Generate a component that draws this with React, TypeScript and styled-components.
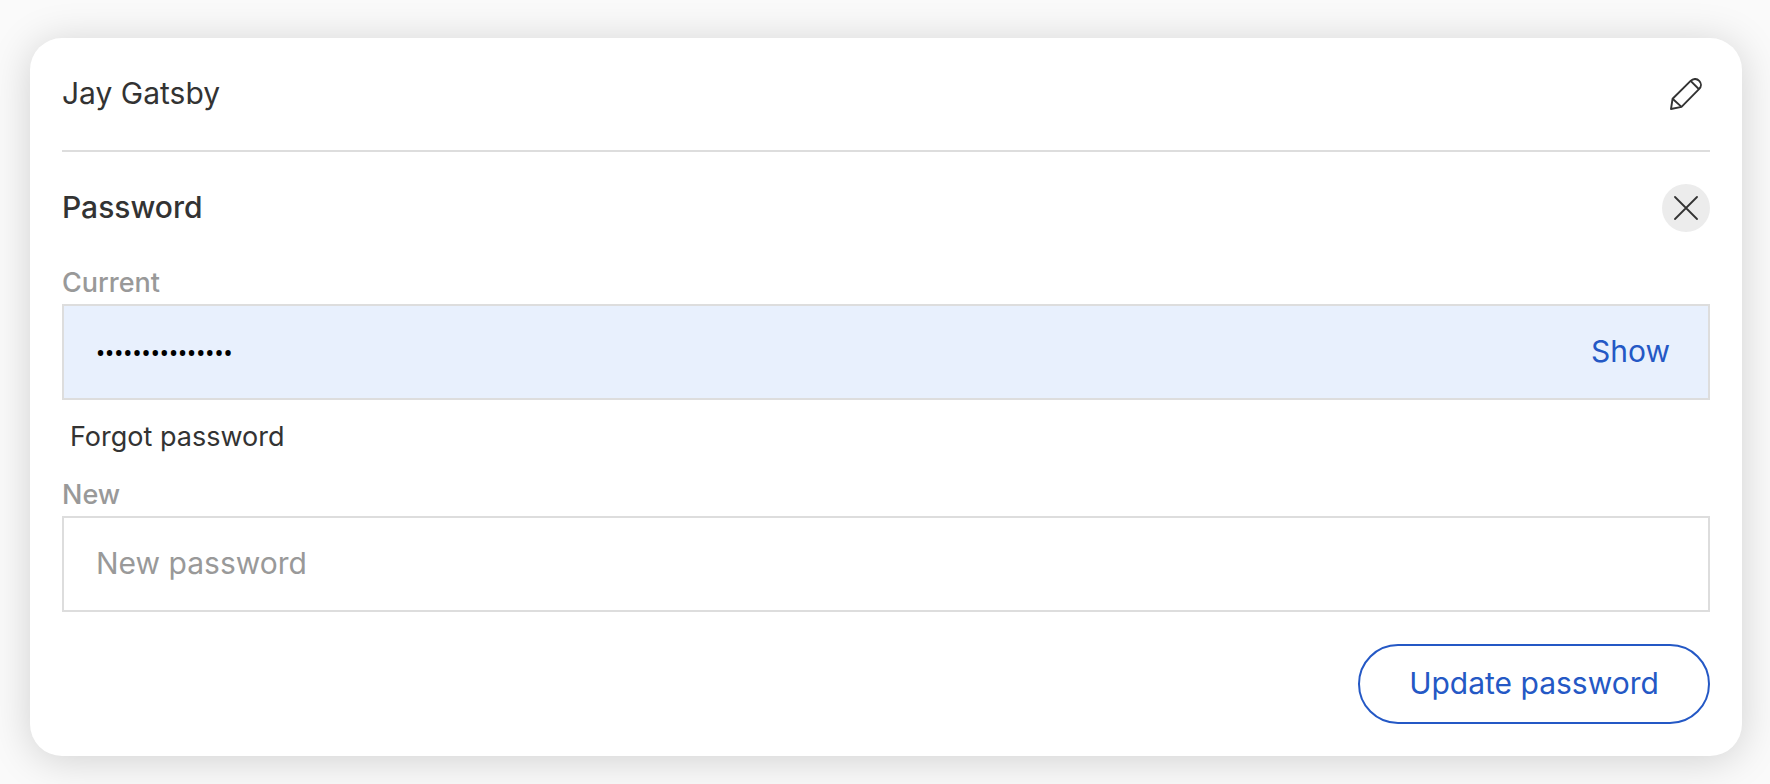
import React, { useState } from "react";
import styled, { createGlobalStyle, css } from "styled-components";

const ink = "#333333";
const muted = "#999999";
const line = "#dddddd";
const blue = "#2458c5";

const GlobalStyle = createGlobalStyle`
  *, *::before, *::after { box-sizing: border-box; }
  body {
    margin: 0;
    background: #fafafa;
    color: ${ink};
    font-family: Inter, "Liberation Sans", sans-serif;
    font-size: 30px;
    font-weight: 400;
    line-height: 38px;
  }
  button, input { font: inherit; color: inherit; }
  button { border: 0; padding: 0; background: none; cursor: pointer; }
`;

const Page = styled.main`
  padding: 38px 28px 28px 30px;
`;

const Card = styled.section`
  padding: 0 32px 32px;
  border-radius: 32px;
  background: #ffffff;
  box-shadow: 0 4px 40px rgba(0, 0, 0, 0.17);
`;

const Row = styled.header<{ $divided?: boolean }>`
  display: flex;
  align-items: center;
  justify-content: space-between;
  height: 112px;
  ${(p) =>
    p.$divided &&
    css`
      height: 114px;
      border-bottom: 2px solid ${line};
    `}
`;

const Name = styled.span`
  padding-bottom: 2px;
`;

const Title = styled.h2`
  margin: 0;
  padding-bottom: 2px;
  font-size: 30px;
  font-weight: 500;
`;

const IconButton = styled.button<{ $filled?: boolean }>`
  display: grid;
  place-items: center;
  width: 48px;
  height: 48px;
  border-radius: 50%;
  background: ${(p) => (p.$filled ? "#ececec" : "transparent")};
`;

const Form = styled.form`
  display: flex;
  flex-direction: column;
`;

const Label = styled.label`
  height: 40px;
  color: ${muted};
  font-size: 27px;
  font-weight: 500;
`;

const Field = styled.div<{ $autofilled?: boolean }>`
  display: flex;
  align-items: center;
  height: 96px;
  padding: 0 38px 0 32px;
  border: 2px solid ${line};
  background: ${(p) => (p.$autofilled ? "#e8f0fd" : "#ffffff")};
`;

const Input = styled.input`
  flex: 1;
  min-width: 0;
  height: 100%;
  padding: 0 0 2px;
  border: 0;
  outline: 0;
  background: none;
  &::placeholder {
    color: ${muted};
    opacity: 1;
  }
`;

const MaskedInput = styled(Input)`
  padding: 4px 0 0;
  color: #000000;
  font-family: Roboto, "Liberation Sans", sans-serif;
  font-size: 27px;
`;

const ShowButton = styled.button`
  padding-bottom: 2px;
  color: ${blue};
`;

const ForgotLink = styled.a`
  align-self: flex-start;
  margin: 18px 0 20px;
  padding: 0 8px;
  color: ${ink};
  font-size: 27px;
  text-decoration: none;
`;

const SubmitButton = styled.button`
  align-self: flex-end;
  width: 352px;
  height: 80px;
  margin-top: 32px;
  padding-bottom: 2px;
  border: 2px solid ${blue};
  border-radius: 40px;
  color: ${blue};
`;

const PencilIcon = () => (
  <svg width="32" height="32" viewBox="0 0 32 32" fill="none" stroke={ink} strokeWidth="1.9" strokeLinejoin="round" aria-hidden="true">
    <path d="M1 31 2.6 20.7 20.6 2.9C23.2.3 26.8.3 29.2 2.8 31.6 5.2 31.5 8.7 29 11.2L11.5 28.9Z" />
    <path d="M2.6 20.7 11.5 28.9M20.6 2.9 29 11.2" />
  </svg>
);

const CloseIcon = () => (
  <svg width="24" height="24" viewBox="0 0 24 24" fill="none" stroke={ink} strokeWidth="1.8" strokeLinecap="round" aria-hidden="true">
    <path d="M1 1 23 23M23 1 1 23" />
  </svg>
);

export default function App() {
  const [shown, setShown] = useState(false);
  return (
    <>
      <GlobalStyle />
      <Page>
        <Card>
          <Row $divided>
            <Name>Jay Gatsby</Name>
            <IconButton type="button" aria-label="Edit name">
              <PencilIcon />
            </IconButton>
          </Row>
          <Row>
            <Title>Password</Title>
            <IconButton type="button" $filled aria-label="Close">
              <CloseIcon />
            </IconButton>
          </Row>
          <Form onSubmit={(e) => e.preventDefault()}>
            <Label htmlFor="current">Current</Label>
            <Field $autofilled>
              <MaskedInput id="current" type={shown ? "text" : "password"} defaultValue="greenlight-1925" />
              <ShowButton type="button" onClick={() => setShown(!shown)}>
                {shown ? "Hide" : "Show"}
              </ShowButton>
            </Field>
            <ForgotLink href="#forgot">Forgot password</ForgotLink>
            <Label htmlFor="new">New</Label>
            <Field>
              <Input id="new" type="password" placeholder="New password" />
            </Field>
            <SubmitButton type="submit">Update password</SubmitButton>
          </Form>
        </Card>
      </Page>
    </>
  );
}
